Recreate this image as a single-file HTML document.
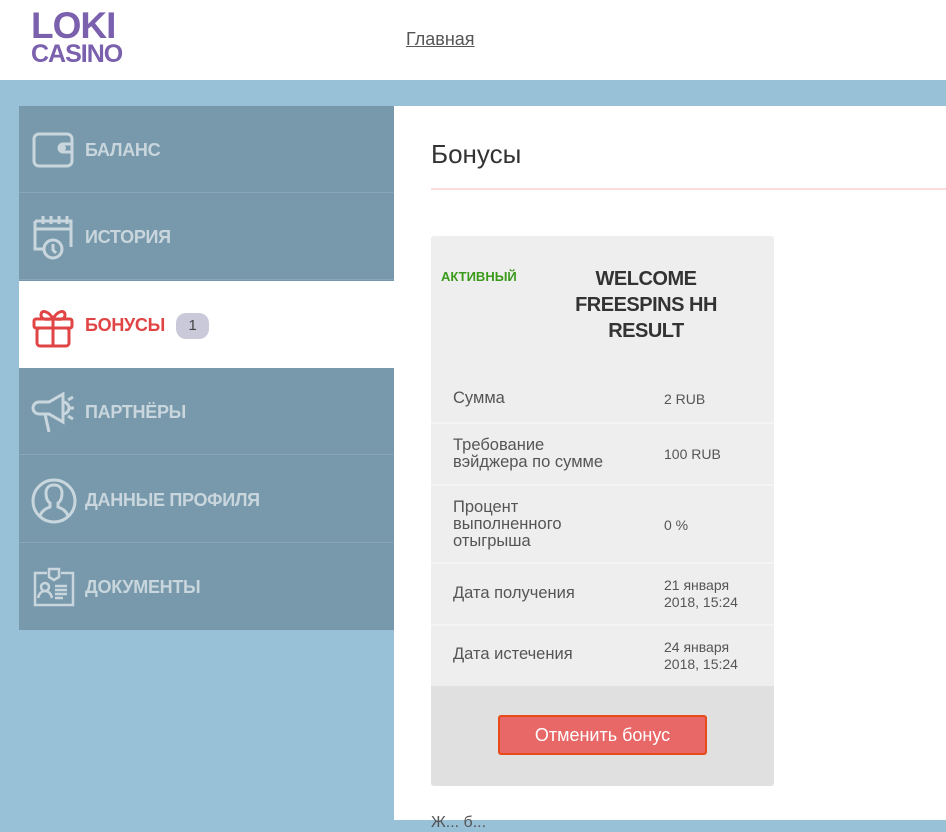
<!DOCTYPE html>
<html><head><meta charset="utf-8"><style>
*{margin:0;padding:0;box-sizing:border-box}
body{width:946px;height:820px;overflow:hidden;background:#98c0d7;font-family:"Liberation Sans","DejaVu Sans",sans-serif;position:relative}
.hdr{position:absolute;left:0;top:0;width:946px;height:80px;background:#fff}
.logo{position:absolute;left:31px;top:11px;color:#7a60ad;font-weight:bold;line-height:1}
.logo .a{font-size:37px;letter-spacing:-1px;line-height:30px}
.logo .b{font-size:25px;margin-top:2px;letter-spacing:-1px;line-height:22px}
.nav{position:absolute;left:406px;top:29px;font-size:18px;color:#555;text-decoration:underline}
.side{position:absolute;left:19px;top:106px;width:375px;height:524px;background:#7799ab}
.it{position:absolute;left:0;width:375px;height:87px;border-bottom:1px solid #87a7b8;color:#c9d6dd;font-weight:bold;font-size:18px;letter-spacing:-.3px}
.it span{position:absolute;left:66px;top:34px}
.it svg{position:absolute;left:12px}
.act{background:#fff;color:#e04444}
.badge{position:absolute;left:157px;top:32px;width:33px;height:26px;border-radius:10px;background:#c9c9da;color:#444;font-size:15px;font-weight:normal;text-align:center;line-height:26px}
.main{position:absolute;left:394px;top:106px;width:552px;height:714px;background:#fff}
h1{position:absolute;left:37px;top:33px;font-size:26px;font-weight:normal;color:#333}
.line{position:absolute;left:37px;top:82px;width:515px;height:2px;background:#fadcdc}
.card{position:absolute;left:37px;top:130px;width:343px;height:550px;background:#eeeeee;border-radius:3px;overflow:hidden}
.st{position:absolute;left:10px;top:33px;color:#3a9a1a;font-weight:bold;font-size:13px}
.tt{position:absolute;left:125px;top:30px;width:180px;text-align:center;font-weight:bold;font-size:20px;line-height:26px;color:#333;letter-spacing:-.5px}
.row{position:absolute;left:0;width:343px;border-bottom:2px solid #f4f4f4;color:#555}
.row .l{position:absolute;left:22px;font-size:16.5px;line-height:17px}
.row .v{position:absolute;left:233px;font-size:14px;line-height:17px}
.foot{position:absolute;left:0;top:450px;width:343px;height:100px;background:#e0e0e0}
.btn{position:absolute;left:67px;top:29px;width:209px;height:40px;background:#e86868;border:2px solid #e84a1a;border-radius:3px;color:#fff;font-size:18px;text-align:center;line-height:36px}
.more{position:absolute;left:37px;top:708px;font-size:16px;color:#555}
</style></head><body>
<div class="hdr"><div class="logo"><div class="a">LOKI</div><div class="b">CASINO</div></div><div class="nav">Главная</div></div>
<div class="side">
<div class="it" style="top:0"><svg style="top:24px" width="46" height="40" viewBox="0 0 46 40" fill="none" stroke="#c9d6dd" stroke-width="3"><rect x="3" y="4" width="38" height="32" rx="5"/><path d="M41 14h-9a4 4 0 0 0 0 8h9"/><circle cx="32" cy="18" r="1.5"/></svg><span>БАЛАНС</span></div>
<div class="it" style="top:87px"><svg style="top:20px" width="46" height="48" viewBox="0 0 46 48" fill="none" stroke="#c9d6dd" stroke-width="3"><path d="M4 8h36v26M4 8v28h10M4 16h36M12 3v8M20 3v8M28 3v8M36 3v8"/><circle cx="22" cy="36" r="9"/><path d="M22 31v6l3 3"/></svg><span>ИСТОРИЯ</span></div>
<div class="it act" style="top:175px;border:none"><svg style="top:26px" width="46" height="42" viewBox="0 0 46 42" fill="none" stroke="#e04444" stroke-width="3"><rect x="3" y="12" width="38" height="9" rx="2"/><rect x="6" y="21" width="32" height="18" rx="3"/><path d="M22 12v27M22 12c-4-8-12-10-12-4s8 4 12 4c4 0 12 2 12-4s-8-4-12 4"/></svg><span>БОНУСЫ</span><div class="badge">1</div></div>
<div class="it" style="top:262px"><svg style="top:24px" width="50" height="44" viewBox="0 0 50 44" fill="none" stroke="#c9d6dd" stroke-width="3"><path d="M8 10h10l14-8v28l-14-8H8a6 6 0 0 1 0-12zM14 22l4 18M32 10a6 6 0 0 1 0 12M37 8l5-3M38 16h5M37 24l5 3"/></svg><span>ПАРТНЁРЫ</span></div>
<div class="it" style="top:350px"><svg style="top:22px" width="46" height="46" viewBox="0 0 46 46" fill="none" stroke="#c9d6dd" stroke-width="3"><circle cx="23" cy="23" r="21"/><path d="M9 38c2-6 7-8 10-9v-4c-3-2-4-6-4-10 0-5 3-8 8-8s8 3 8 8c0 4-1 8-4 10v4c3 1 8 3 10 9"/></svg><span>ДАННЫЕ ПРОФИЛЯ</span></div>
<div class="it" style="top:437px;border:none"><svg style="top:22px" width="46" height="46" viewBox="0 0 46 46" fill="none" stroke="#c9d6dd" stroke-width="2.5"><path d="M16 8H4v32h38V8H30M18 4h10v8l-5 3-5-3z"/><circle cx="14" cy="22" r="4"/><path d="M7 33c1-5 4-7 7-7s6 2 7 7M24 21h12M24 25h12M24 29h12M24 33h8"/></svg><span>ДОКУМЕНТЫ</span></div>
</div>
<div class="main">
<h1>Бонусы</h1><div class="line"></div>
<div class="card">
<div class="st">АКТИВНЫЙ</div>
<div class="tt">WELCOME FREESPINS HH RESULT</div>
<div class="row" style="top:140px;height:48px"><div class="l" style="top:14px">Сумма</div><div class="v" style="top:15px">2 RUB</div></div>
<div class="row" style="top:188px;height:62px"><div class="l" style="top:13px">Требование<br>вэйджера по сумме</div><div class="v" style="top:22px">100 RUB</div></div>
<div class="row" style="top:250px;height:78px"><div class="l" style="top:13px">Процент<br>выполненного<br>отыгрыша</div><div class="v" style="top:31px">0 %</div></div>
<div class="row" style="top:328px;height:62px"><div class="l" style="top:21px">Дата получения</div><div class="v" style="top:13px">21 января<br>2018, 15:24</div></div>
<div class="row" style="top:390px;height:60px;border:none"><div class="l" style="top:20px">Дата истечения</div><div class="v" style="top:13px">24 января<br>2018, 15:24</div></div>
<div class="foot"><div class="btn">Отменить бонус</div></div>
</div>
<div class="more">Ж... б...</div>
</div>
</body></html>
